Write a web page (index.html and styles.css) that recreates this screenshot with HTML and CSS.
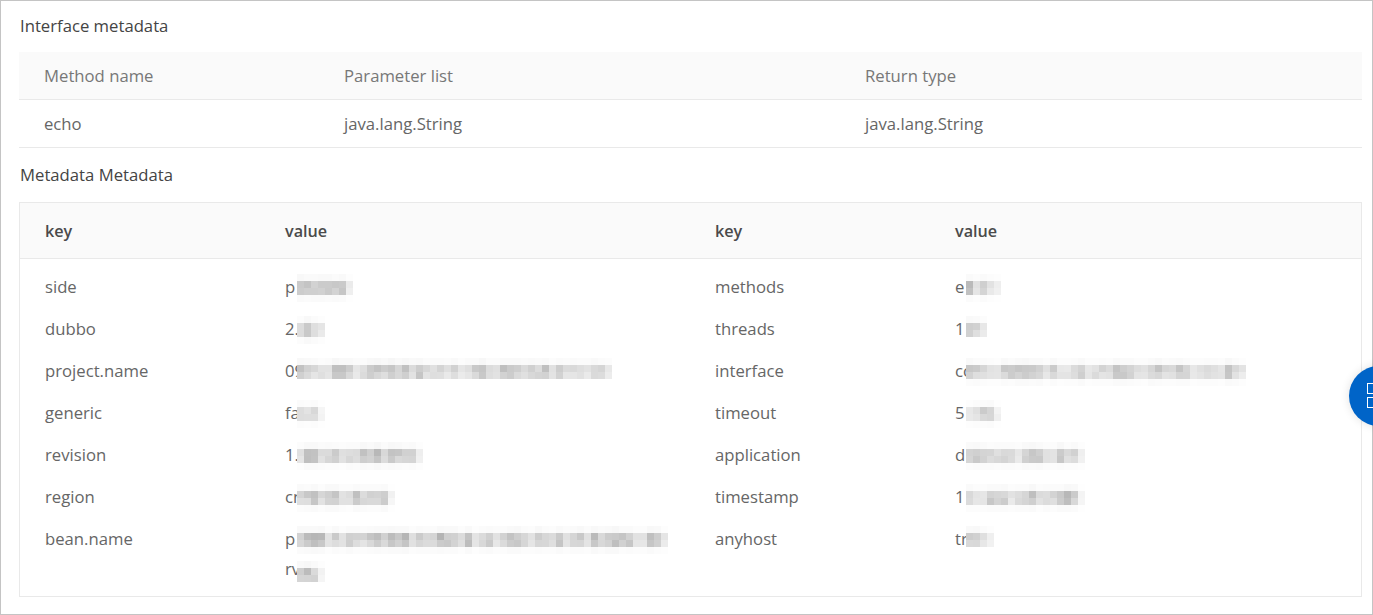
FILE: index.html
```html
<!DOCTYPE html>
<html lang="en">
<head>
<meta charset="utf-8">
<title>Interface metadata</title>
<link rel="stylesheet" href="styles.css">
</head>
<body>
<main class="page">
  <h2 class="title">Interface metadata</h2>
  <div class="methods">
    <div class="m-row m-head"><span>Method name</span><span>Parameter list</span><span>Return type</span></div>
    <div class="m-row"><span>echo</span><span>java.lang.String</span><span>java.lang.String</span></div>
  </div>
  <h2 class="title title-second">Metadata Metadata</h2>
  <section class="meta">
    <div class="k-row k-head"><span>key</span><span>value</span><span>key</span><span>value</span></div>
    <div class="k-body">
      <div class="k-row"><span>side</span><span class="v"><span class="line">p<canvas class="mosaic" data-w="8" data-r="4"></canvas></span></span><span>methods</span><span class="v r"><span class="line">e<canvas class="mosaic" data-w="5" data-r="4"></canvas></span></span></div>
      <div class="k-row"><span>dubbo</span><span class="v"><span class="line">2.<canvas class="mosaic" data-w="4" data-r="4"></canvas></span></span><span>threads</span><span class="v r"><span class="line">1<canvas class="mosaic" data-w="3" data-r="3"></canvas></span></span></div>
      <div class="k-row"><span>project.name</span><span class="v"><span class="line">09<canvas class="mosaic" data-w="45" data-r="3"></canvas></span></span><span>interface</span><span class="v r"><span class="line">co<canvas class="mosaic" data-w="40" data-r="4"></canvas></span></span></div>
      <div class="k-row"><span>generic</span><span class="v"><span class="line">fa<canvas class="mosaic" data-w="4" data-r="4"></canvas></span></span><span>timeout</span><span class="v r"><span class="line">5<canvas class="mosaic" data-w="5" data-r="4"></canvas></span></span></div>
      <div class="k-row"><span>revision</span><span class="v"><span class="line">1.<canvas class="mosaic" data-w="18" data-r="4"></canvas></span></span><span>application</span><span class="v r"><span class="line">d<canvas class="mosaic" data-w="17" data-r="4"></canvas></span></span></div>
      <div class="k-row"><span>region</span><span class="v"><span class="line">cn<canvas class="mosaic" data-w="14" data-r="4"></canvas></span></span><span>timestamp</span><span class="v r"><span class="line">1<canvas class="mosaic" data-w="17" data-r="4"></canvas></span></span></div>
      <div class="k-row"><span>bean.name</span><span class="v"><span class="line">p<canvas class="mosaic" data-w="53" data-r="4"></canvas></span><span class="line">rv<canvas class="mosaic mosaic-low" data-w="4" data-r="3"></canvas></span></span><span>anyhost</span><span class="v r"><span class="line">tr<canvas class="mosaic" data-w="4" data-r="3"></canvas></span></span></div>
    </div>
  </section>
</main>
<aside class="fab" aria-label="Apps">
  <svg class="fab-icon" width="24" height="26" viewBox="0 0 24 26" fill="none" stroke="#fff" stroke-width="1"><rect x="0.5" y="0.5" width="10" height="10"/><rect x="0.5" y="14.5" width="10" height="10"/><rect x="14.5" y="0.5" width="9" height="10"/><rect x="14.5" y="14.5" width="9" height="10"/></svg>
</aside>
<script src="mosaic.js"></script>
</body>
</html>
```
FILE: styles.css
```css
* { box-sizing: border-box; }
html, body { margin: 0; height: 100%; }
body {
  position: relative;
  overflow: hidden;
  background: #fff;
  color: #444;
  font-family: "Open Sans", "Noto Sans", sans-serif;
  font-size: 16.7px;
}
.page {
  height: 615px;
  border: 1px solid #c4c4c4;
  padding: 0 10px 0 18px;
}
.title {
  margin: 0;
  font-size: 16.7px;
  font-weight: 400;
  line-height: 22px;
  height: 51px;
  padding: 14px 0 0 1px;
  color: #444;
}
.title-second {
  height: 54px;
  padding-top: 16px;
}
.methods { color: #666; }
.m-row {
  display: grid;
  grid-template-columns: 300px 521px 1fr;
  height: 48px;
  padding-left: 25px;
  align-items: center;
  border-bottom: 1px solid #e9e9e9;
}
.m-head { background: #fafafa; color: #777; }
.meta {
  border: 1px solid #e9e9e9;
  height: 395px;
  width: 1343px;
}
.k-row {
  display: grid;
  grid-template-columns: 240px 430px 240px 1fr;
  padding-left: 25px;
  line-height: 30px;
  padding-top: 6px;
  padding-bottom: 6px;
  color: #666;
}
.k-head {
  height: 56px;
  padding-top: 13px;
  background: #fafafa;
  border-bottom: 1px solid #e9e9e9;
  font-size: 16.2px;
  font-weight: 600;
  color: #4a4a4a;
}
.k-body { padding: 7px 0; }
.v { display: block; }
.line {
  display: block;
  position: relative;
  height: 30px;
}
.mosaic {
  position: absolute;
  top: 2px;
  left: 12px;
  display: block;
}
.r .mosaic { left: 11px; }
.mosaic-low { top: 7px; }
.fab {
  position: absolute;
  left: 1349px;
  top: 366px;
  width: 60px;
  height: 60px;
  border-radius: 50%;
  background: #0064c8;
  box-shadow: 0 0 10px rgba(0, 0, 0, 0.12);
}
.fab-icon {
  position: absolute;
  left: 18px;
  top: 17px;
}
```
FILE: mosaic.js
```js
// Pixelated redaction blocks: 7px cells, lighter on the outer rows.
var seed = 17;
function rnd() {
  seed = (seed * 16807) % 2147483647;
  return (seed % 1000) / 1000;
}
document.querySelectorAll('.mosaic').forEach(function (c) {
  var w = +c.dataset.w, r = +c.dataset.r, S = 7;
  c.width = w * S;
  c.height = r * S;
  var g = c.getContext('2d');
  var profile = r === 4 ? [0.1, 0.95, 0.85, 0.08] : [0.12, 0.95, 0.8];
  for (var x = 0; x < w; x++) {
    var col = 0.4 + rnd() * 0.6;
    if (x === w - 1) col *= 0.4;
    for (var y = 0; y < r; y++) {
      var d = col * profile[y] * (0.8 + rnd() * 0.4);
      var v = Math.round(255 - d * 68);
      g.fillStyle = 'rgb(' + v + ',' + v + ',' + v + ')';
      g.fillRect(x * S, y * S, S, S);
    }
  }
});
```
